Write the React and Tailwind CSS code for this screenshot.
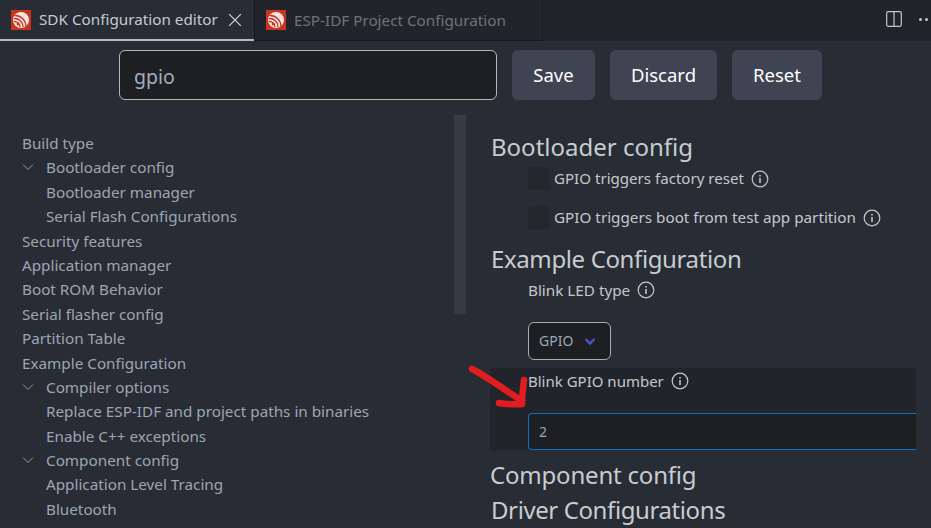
const EspLogo = () => (
  <svg viewBox="0 0 20 20" className="h-5 w-5 shrink-0">
    <rect width="20" height="20" fill="#c8341f" />
    <circle cx="10" cy="10" r="8" fill="#f4e4df" />
    <g fill="none" stroke="#c8341f" strokeWidth="1.3" strokeLinecap="round">
      <path d="M4 5.5a11 11 0 0 1 11 11" />
      <path d="M3.5 8.5a8.5 8.5 0 0 1 8.5 8" />
      <path d="M3.5 11.5a5.5 5.5 0 0 1 5.5 5" />
    </g>
    <circle cx="7" cy="14" r="1.4" fill="#c8341f" />
  </svg>
);

const InfoIcon = () => (
  <svg viewBox="0 0 18 18" className="h-[18px] w-[18px] shrink-0" fill="none" stroke="#c4c6c9">
    <circle cx="9" cy="9" r="7.8" strokeWidth="1.2" />
    <path d="M9 8v5" strokeWidth="1.6" />
    <path d="M9 5v1.5" strokeWidth="1.6" />
  </svg>
);

const Chevron = () => (
  <svg viewBox="0 0 12 12" className="h-3 w-3" fill="none" stroke="#8f99a6" strokeWidth="1">
    <path d="m1 3.5 5 5 5-5" />
  </svg>
);

const navItems = [
  { label: "Build type", level: 0 },
  { label: "Bootloader config", level: 1, open: true },
  { label: "Bootloader manager", level: 1 },
  { label: "Serial Flash Configurations", level: 1 },
  { label: "Security features", level: 0 },
  { label: "Application manager", level: 0 },
  { label: "Boot ROM Behavior", level: 0 },
  { label: "Serial flasher config", level: 0 },
  { label: "Partition Table", level: 0 },
  { label: "Example Configuration", level: 0 },
  { label: "Compiler options", level: 1, open: true },
  { label: "Replace ESP-IDF and project paths in binaries", level: 1 },
  { label: "Enable C++ exceptions", level: 1 },
  { label: "Component config", level: 1, open: true },
  { label: "Application Level Tracing", level: 1 },
  { label: "Bluetooth", level: 1 },
  { label: "Driver Configurations", level: 1 },
];

const Tab = ({ label, active }) => (
  <div
    className={
      active
        ? "flex h-[41px] w-[254px] items-center border-b-2 border-[#b9babb] bg-[#282c34] pl-[11px] text-[15.25px] text-[#c4cbd4]"
        : "flex h-[41px] w-[289px] items-center border-x border-b border-[#181a1f] bg-[#21252b] pl-[11px] text-[15.25px] text-[#6f7378]"
    }
  >
    <EspLogo />
    <span className="ml-2">{label}</span>
    {active && (
      <svg viewBox="0 0 12 12" className="ml-[10px] h-3.5 w-3.5" fill="none" stroke="#d0d3d7" strokeWidth="1.1">
        <path d="m1 1 10 10M11 1 1 11" />
      </svg>
    )}
  </div>
);

const ActionButton = ({ label, width }) => (
  <button className={`h-[50px] rounded-md bg-[#3e4451] text-[18.5px] text-white ${width}`}>{label}</button>
);

const Check = ({ label, size }) => (
  <div className="flex h-[23px] items-center">
    <span className="h-[23px] w-[22px] rounded bg-[#23262d]" />
    <span className={`ml-1 text-[#c4c8cd] ${size}`}>{label}</span>
    <span className="ml-[7px]"><InfoIcon /></span>
  </div>
);

const Heading = ({ children, className }) => (
  <h2 className={`text-[24px] leading-[32px] text-[#c8ccd0] ${className}`}>{children}</h2>
);

export default function App() {
  return (
    <div className="relative h-[528px] w-[931px] overflow-hidden bg-[#282c34] font-['Noto_Sans',sans-serif]">
      <div className="flex h-[41px] items-start bg-[#21252b]">
        <Tab label="SDK Configuration editor" active />
        <Tab label="ESP-IDF Project Configuration" />
        <div className="ml-auto flex items-center gap-[17px] pt-[11px]">
          <svg viewBox="0 0 16 16" className="h-4 w-4" fill="none" stroke="#c5c7ca" strokeWidth="1.2">
            <rect x="0.7" y="0.7" width="14.6" height="14.6" rx="1.5" />
            <path d="M8 1v14" />
          </svg>
          <div className="flex w-[12px] gap-[3px] overflow-hidden">
            <span className="h-[3px] w-[3px] shrink-0 rounded-full bg-[#c5c7ca]" />
            <span className="h-[3px] w-[3px] shrink-0 rounded-full bg-[#c5c7ca]" />
            <span className="h-[3px] w-[3px] shrink-0 rounded-full bg-[#c5c7ca]" />
          </div>
        </div>
      </div>

      <div className="flex h-[74px] items-start pl-[119px] pt-[9px]">
        <div className="flex h-[50px] w-[378px] items-center rounded-md border border-[#b4b6b9] bg-[#1e1f23] px-[14px] pt-[3px] text-[19.5px] text-[#a4adba]">
          gpio
        </div>
        <div className="ml-[15px] flex gap-[15px]">
          <ActionButton label="Save" width="w-[83px]" />
          <ActionButton label="Discard" width="w-[107px]" />
          <ActionButton label="Reset" width="w-[90px]" />
        </div>
      </div>

      <div className="flex">
        <nav className="w-[454px] pl-[22px] pt-[16px] text-[15.25px] leading-[24.4px] text-[#9ca6b3]">
          {navItems.map((item) => (
            <div key={item.label} className="relative h-[24.4px] whitespace-nowrap">
              {item.open && (
                <span className="absolute left-0 top-[6px]"><Chevron /></span>
              )}
              <span className={item.level === 1 ? "pl-[24px]" : ""}>{item.label}</span>
            </div>
          ))}
        </nav>
        <div className="h-[199px] w-3 bg-[#363a44]" />
        <main className="ml-6 w-[441px] pt-[16px]">
          <Heading className="pl-[1px]">Bootloader config</Heading>
          <div className="mt-[4px] flex flex-col gap-4 pl-[38px]">
            <Check label="GPIO triggers factory reset" size="text-[15.1px]" />
            <Check label="GPIO triggers boot from test app partition" size="text-[15.25px]" />
          </div>
          <Heading className="mt-[14px] pl-[1px] tracking-[-0.38px]">Example Configuration</Heading>
          <div className="mt-[4px] flex items-center pl-[38px] text-[15.25px] text-[#c4c8cd]">
            Blink LED type
            <span className="ml-[7px]"><InfoIcon /></span>
          </div>
          <div className="ml-[38px] mt-[20px] flex h-[38px] w-[83px] items-center rounded-md border border-[#a9acb0] bg-[#1e1f23] pl-[10px] text-[14px] text-[#9aa6b5]">
            GPIO
            <svg viewBox="0 0 12 12" className="ml-[11px] h-3 w-3" fill="none" stroke="#4459c8" strokeWidth="2.4">
              <path d="m1.5 4 4.5 4.5L10.5 4" />
            </svg>
          </div>
          <div className="mt-[8px] h-[82px] w-[426px] bg-[#21242b] pl-[38px]">
            <div className="flex h-[26px] items-center text-[15px] text-[#c4c8cd]">
              Blink GPIO number
              <span className="ml-[7px]"><InfoIcon /></span>
            </div>
            <div className="mt-[19px] flex h-[37px] items-center rounded-l border border-r-0 border-[#0b70c4] bg-[#1e1f23] pl-[10px] text-[14px] text-[#9aa6b5]">
              2
            </div>
          </div>
          <Heading className="mt-[9px] tracking-[-0.2px]">Component config</Heading>
          <Heading className="mt-[3px] pl-[1px] tracking-[-0.4px]">Driver Configurations</Heading>
        </main>
      </div>

      <svg viewBox="0 0 70 50" className="absolute left-[466px] top-[364px] h-[50px] w-[70px]" fill="none" stroke="#e21d1f" strokeWidth="6.5" strokeLinecap="round" strokeLinejoin="round">
        <path d="M6 5c14 7 30 19 50 32" />
        <path d="M58 16c-1 9-2 16-2 24-8 1-16 0-23-1" />
      </svg>
    </div>
  );
}
